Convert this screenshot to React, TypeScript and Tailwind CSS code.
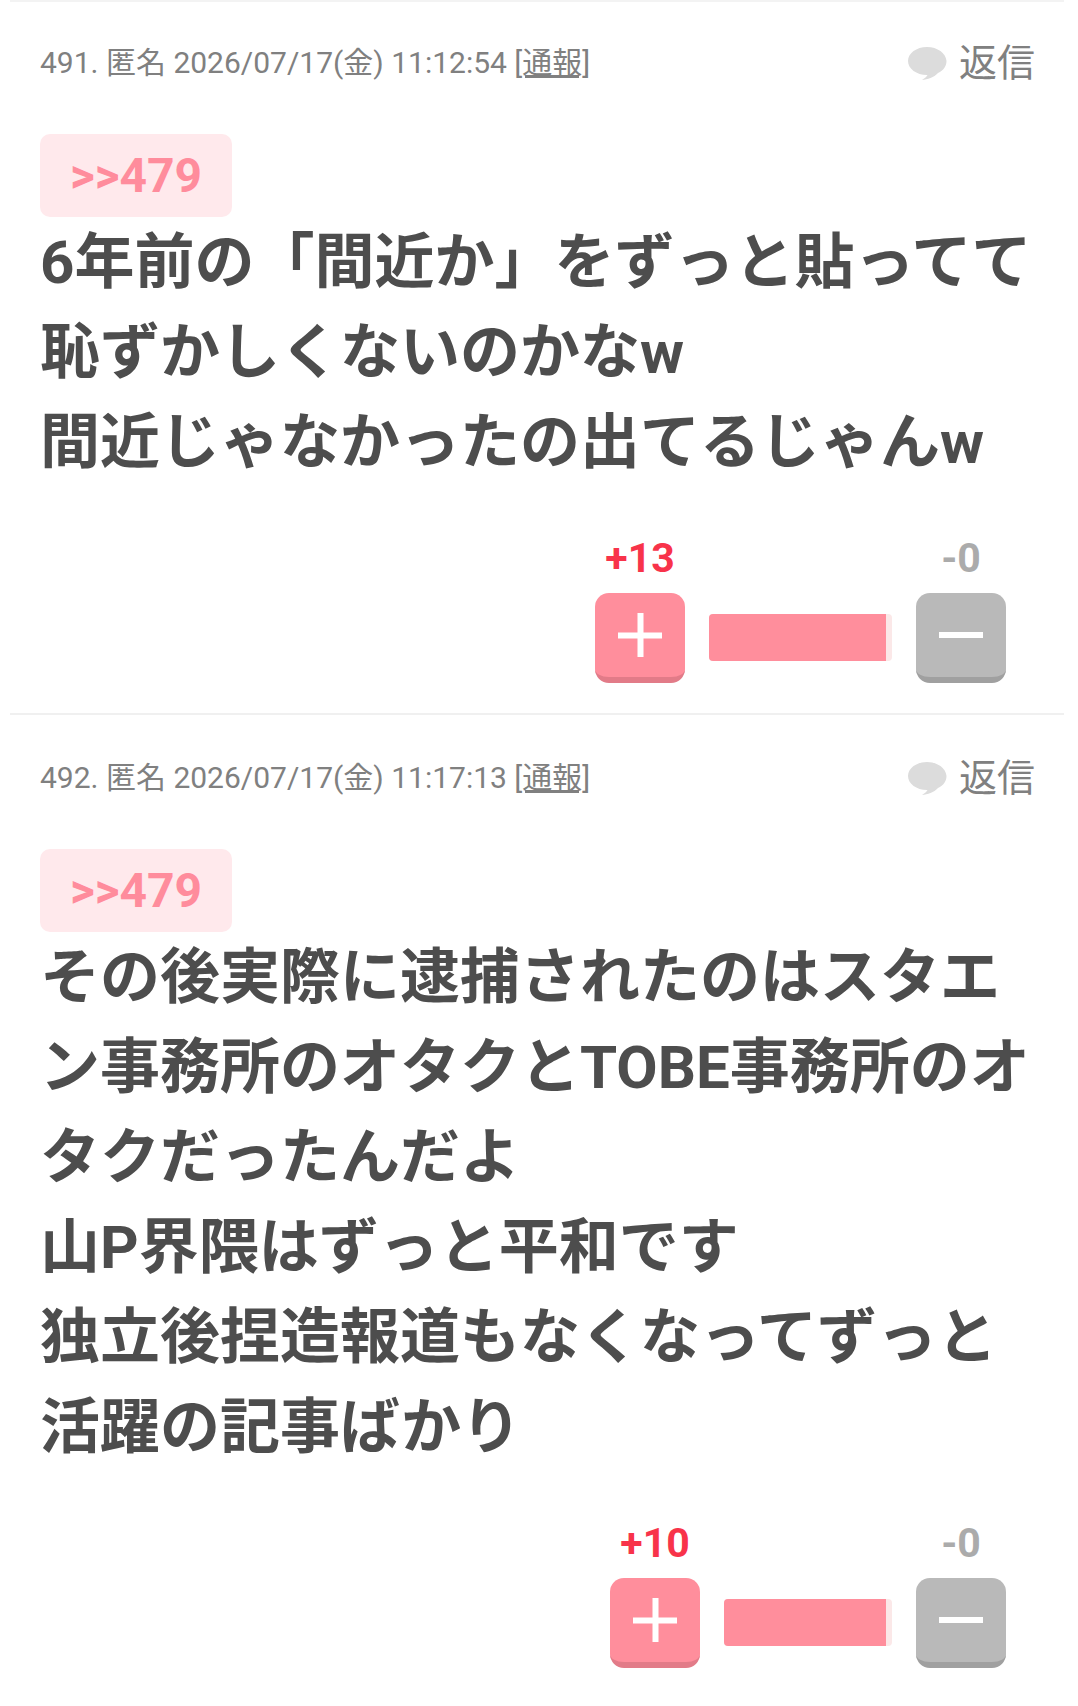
const font = { fontFamily: '"Roboto","Noto Sans CJK JP",sans-serif' };

function Bubble() {
  return (
    <svg width="40" height="36" viewBox="0 0 40 36" className="shrink-0">
      <path d="M20 2C9.5 2 1 8.300 1 16c0 7.700 8.500 14 19 14h.5c-1.200 2-3 3.500-5.500 5 5.500-.5 12-2.500 16-7 5.500-2.500 8.500-7 8.500-12C39 8.300 30.500 2 20 2z" fill="#dcdcdc" />
    </svg>
  );
}

function Comment({ no, time, lines, plus, barW, last }: { no: number; time: string; lines: string[]; plus: number; barW: number; last?: boolean }) {
  return (
    <div className={last ? "ml-[10px] mr-[14px] pl-[30px] pr-[29px] pt-[41px]" : "ml-[10px] mr-[14px] pl-[30px] pr-[29px] pt-[39px] pb-[30px] border-b-2 border-[#f0f0f0]"}>
      <div className="flex items-center justify-between h-[44px]">
        <div className="text-[30px] leading-[44px] text-[#808080] whitespace-nowrap">
          {no}. 匿名 {time} <span className="underline">[通報]</span>
        </div>
        <div className="flex items-center gap-[12px]">
          <Bubble />
          <span className="text-[38px] leading-[44px] text-[#808080]">返信</span>
        </div>
      </div>
      <div className="mt-[49px] w-[192px] h-[83px] rounded-[10px] bg-[#ffe9ec] flex items-center justify-center text-[48px] font-bold text-[#ff8c9c]">
        &gt;&gt;479
      </div>
      <div className="mt-[1px] text-[60px] leading-[90px] font-bold text-[#4d4d4d] whitespace-nowrap">
        {lines.map((l) => (
          <div key={l}>{l}</div>
        ))}
      </div>
      <div className="mt-[47px] flex justify-end pr-[29px] items-end gap-[24px]">
        <div className="flex flex-col items-center">
          <div className="text-[41px] leading-[46px] font-bold text-[#f8334a]">+{plus}</div>
          <div className="mt-[12px] w-[90px] h-[90px] rounded-[14px] bg-[#ff8e9c] border-b-[6px] border-[#e27b88] flex items-center justify-center">
            <svg width="44" height="44" viewBox="0 0 44 44"><path d="M19.500 0h6v19.500H44v6H25.500V44h-6V25.500H0v-6h19.500z" fill="#fff" /></svg>
          </div>
        </div>
        <div className="flex h-[47px] mb-[22px] bg-[#fbe8e8] rounded-[4px] pr-[6px]" style={{ width: barW + 6 }}>
          <div className="h-full w-full bg-[#ff8e9c] rounded-l-[4px]" />
        </div>
        <div className="flex flex-col items-center">
          <div className="text-[41px] leading-[46px] font-bold text-[#ababab]">-0</div>
          <div className="mt-[12px] w-[90px] h-[90px] rounded-[14px] bg-[#b9b9b9] border-b-[6px] border-[#a0a0a0] flex items-center justify-center">
            <div className="w-[44px] h-[6px] bg-white" />
          </div>
        </div>
      </div>
    </div>
  );
}

export default function App() {
  return (
    <div className="w-[1078px] h-[1706px] bg-white overflow-hidden" style={font}>
      <div className="ml-[10px] mr-[14px] h-[2px] bg-[#f3f3f3]" />
      <Comment no={491} time="2026/07/17(金) 11:12:54" plus={13} barW={177}
        lines={["6年前の「間近か」をずっと貼ってて", "恥ずかしくないのかなw", "間近じゃなかったの出てるじゃんw"]} />
      <Comment no={492} time="2026/07/17(金) 11:17:13" plus={10} barW={162} last
        lines={["その後実際に逮捕されたのはスタエ", "ン事務所のオタクとTOBE事務所のオ", "タクだったんだよ", "山P界隈はずっと平和です", "独立後捏造報道もなくなってずっと", "活躍の記事ばかり"]} />
    </div>
  );
}
